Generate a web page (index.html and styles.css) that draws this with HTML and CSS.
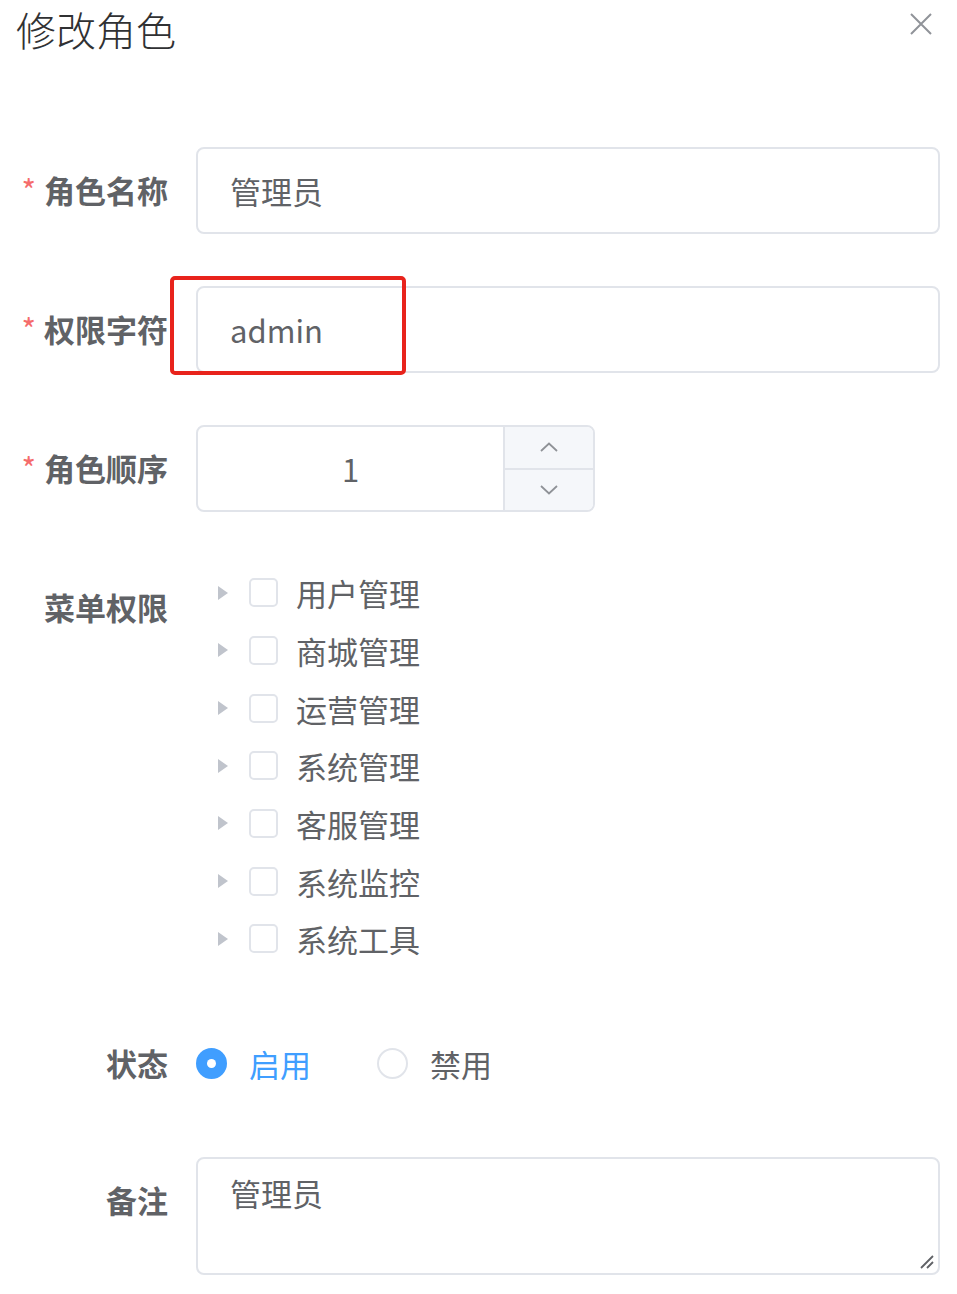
FILE: index.html
```html
<!DOCTYPE html>
<html lang="zh-CN">
<head>
<meta charset="utf-8">
<title>修改角色</title>
<link rel="stylesheet" href="styles.css">
</head>
<body>
<div class="dialog">
  <div class="header">
    <span class="title">修改角色</span>
    <svg class="close" width="26" height="26" viewBox="0 0 26 26"><path d="M3 3 L23 23 M23 3 L3 23" stroke="#909399" stroke-width="2" fill="none"/></svg>
  </div>
  <div class="form">
    <div class="item">
      <div class="label required">角色名称</div>
      <div class="content"><div class="input">管理员</div></div>
    </div>
    <div class="item">
      <div class="label required">权限字符</div>
      <div class="content"><div class="input">admin</div></div>
      <div class="highlight"></div>
    </div>
    <div class="item">
      <div class="label required">角色顺序</div>
      <div class="content">
        <div class="number">
          <div class="number-value">1</div>
          <div class="number-btns">
            <div class="num-btn"><svg width="18" height="10" viewBox="0 0 18 10"><path d="M1 9 L9 1.5 L17 9" stroke="#8f9297" stroke-width="1.8" fill="none"/></svg></div>
            <div class="num-btn num-btn-down"><svg width="18" height="10" viewBox="0 0 18 10"><path d="M1 1 L9 8.5 L17 1" stroke="#8f9297" stroke-width="1.8" fill="none"/></svg></div>
          </div>
        </div>
      </div>
    </div>
    <div class="item">
      <div class="label">菜单权限</div>
      <div class="content">
        <div class="tree">
          <div class="node"><svg class="caret" width="10" height="14" viewBox="0 0 10 14"><path d="M0 0 L10 7 L0 14 Z" fill="#c0c4cc"/></svg><span class="checkbox"></span><span class="node-label">用户管理</span></div>
          <div class="node"><svg class="caret" width="10" height="14" viewBox="0 0 10 14"><path d="M0 0 L10 7 L0 14 Z" fill="#c0c4cc"/></svg><span class="checkbox"></span><span class="node-label">商城管理</span></div>
          <div class="node"><svg class="caret" width="10" height="14" viewBox="0 0 10 14"><path d="M0 0 L10 7 L0 14 Z" fill="#c0c4cc"/></svg><span class="checkbox"></span><span class="node-label">运营管理</span></div>
          <div class="node"><svg class="caret" width="10" height="14" viewBox="0 0 10 14"><path d="M0 0 L10 7 L0 14 Z" fill="#c0c4cc"/></svg><span class="checkbox"></span><span class="node-label">系统管理</span></div>
          <div class="node"><svg class="caret" width="10" height="14" viewBox="0 0 10 14"><path d="M0 0 L10 7 L0 14 Z" fill="#c0c4cc"/></svg><span class="checkbox"></span><span class="node-label">客服管理</span></div>
          <div class="node"><svg class="caret" width="10" height="14" viewBox="0 0 10 14"><path d="M0 0 L10 7 L0 14 Z" fill="#c0c4cc"/></svg><span class="checkbox"></span><span class="node-label">系统监控</span></div>
          <div class="node"><svg class="caret" width="10" height="14" viewBox="0 0 10 14"><path d="M0 0 L10 7 L0 14 Z" fill="#c0c4cc"/></svg><span class="checkbox"></span><span class="node-label">系统工具</span></div>
        </div>
      </div>
    </div>
    <div class="item item-status">
      <div class="label">状态</div>
      <div class="content radios">
        <div class="radio checked"><span class="radio-dot"></span><span class="radio-label">启用</span></div>
        <div class="radio"><span class="radio-dot"></span><span class="radio-label">禁用</span></div>
      </div>
    </div>
    <div class="item">
      <div class="label">备注</div>
      <div class="content">
        <div class="textarea">管理员
          <svg class="resize" width="18" height="18" viewBox="0 0 18 18"><path d="M16 4 L4 16 M16 10 L10 16" stroke="#606266" stroke-width="1.8" fill="none"/></svg>
        </div>
      </div>
    </div>
  </div>
</div>
</body>
</html>
```

FILE: styles.css
```css
* { box-sizing: border-box; }
html, body { margin: 0; padding: 0; background: #ffffff; }
body {
  font-family: "Noto Sans CJK SC", "Noto Sans", sans-serif;
  color: #606266;
  width: 957px;
}
.dialog { padding: 0 17px 0 0; }
.header {
  display: flex;
  justify-content: space-between;
  align-items: flex-start;
  height: 54px;
  padding-left: 16px;
}
.title {
  font-size: 40px;
  line-height: 58px;
  color: #303133;
  font-weight: 300;
}
.close { margin-top: 11px; margin-right: 6px; }
.form { padding-top: 93px; }
.item {
  display: flex;
  position: relative;
  margin-bottom: 52px;
}
.item-status { margin-bottom: 50px; }
.label {
  width: 196px;
  flex: none;
  padding-right: 28px;
  text-align: right;
  font-size: 31px;
  font-weight: 700;
  line-height: 85px;
  color: #606266;
}
.label.required::before {
  content: "*";
  color: #f56c6c;
  margin-right: 8px;
  font-weight: 400;
}
.content { flex: 1; }
.input {
  height: 87px;
  border: 2px solid #e1e4ea;
  border-radius: 8px;
  padding-left: 32px;
  font-size: 31px;
  line-height: 83px;
  color: #606266;
}
.highlight {
  position: absolute;
  left: 170px;
  top: -10px;
  width: 236px;
  height: 99px;
  border: 4px solid #e8231c;
  border-radius: 5px;
}
.number {
  width: 399px;
  height: 87px;
  border: 2px solid #e1e4ea;
  border-radius: 8px;
  display: flex;
  overflow: hidden;
}
.number-value {
  flex: 1;
  text-align: center;
  font-size: 31px;
  line-height: 83px;
  color: #606266;
}
.number-btns {
  width: 90px;
  display: flex;
  flex-direction: column;
  border-left: 2px solid #e1e4ea;
  background: #f5f7fa;
}
.num-btn {
  flex: 1;
  display: flex;
  align-items: center;
  justify-content: center;
}
.num-btn-down { border-top: 2px solid #e1e4ea; }
.tree { display: flex; flex-direction: column; }
.node {
  height: 57.67px;
  display: flex;
  align-items: center;
}
.caret { margin-left: 22px; flex: none; }
.checkbox {
  width: 29px;
  height: 29px;
  margin-left: 21px;
  border: 2px solid #e1e4ea;
  border-radius: 5px;
  flex: none;
}
.node-label {
  margin-left: 18px;
  font-size: 31px;
  color: #606266;
}
.radios {
  display: flex;
  align-items: center;
  height: 87px;
}
.radio {
  display: flex;
  align-items: center;
  margin-right: 66px;
}
.radio-dot {
  width: 31px;
  height: 31px;
  border-radius: 50%;
  border: 2px solid #e1e4ea;
  position: relative;
  flex: none;
}
.radio.checked .radio-dot {
  background: #409eff;
  border-color: #409eff;
}
.radio.checked .radio-dot::after {
  content: "";
  position: absolute;
  left: 50%;
  top: 50%;
  width: 9px;
  height: 9px;
  margin: -4.5px 0 0 -4.5px;
  border-radius: 50%;
  background: #ffffff;
}
.radio-label {
  margin-left: 22px;
  font-size: 31px;
  color: #606266;
}
.radio.checked .radio-label { color: #409eff; }
.textarea {
  position: relative;
  height: 118px;
  border: 2px solid #e1e4ea;
  border-radius: 8px;
  padding: 11px 32px;
  font-size: 31px;
  line-height: 46px;
  color: #606266;
}
.resize {
  position: absolute;
  right: 3px;
  bottom: 3px;
}
```
